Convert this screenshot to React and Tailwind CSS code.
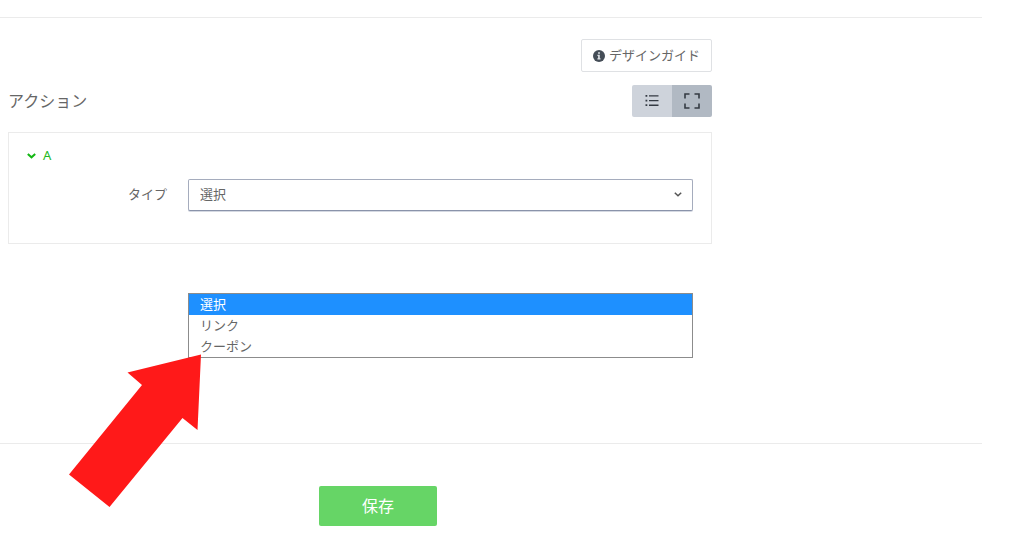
import { useState } from 'react';

const options = ['選択', 'リンク', 'クーポン'];

function InfoIcon() {
  return (
    <svg viewBox="0 0 12 12" className="size-3 shrink-0" aria-hidden="true">
      <circle cx="6" cy="6" r="6" fill="#454d57" />
      <path d="M5.1 2.2h1.8v1.6H5.1zM4.4 4.8h2.4v3.5h.7v1.1H4.4V8.3h.7V5.9h-.7z" fill="#dfe3e7" />
    </svg>
  );
}

function ListIcon() {
  return (
    <svg viewBox="0 0 14 14" className="size-3.5" aria-hidden="true" fill="#343a43">
      <path d="M0.500 1h1.800v1.800H0.500zM0.500 5.700h1.800v1.800H0.500zM0.500 10.300h1.800v1.800H0.500zM4 1.200h9.500v1.400H4zM4 5.900h9.500v1.400H4zM4 10.500h9.500v1.600H4z" />
    </svg>
  );
}

function ExpandIcon() {
  return (
    <svg viewBox="0 0 16 16" className="size-4" aria-hidden="true" fill="none" stroke="#343a43" strokeWidth="1.6">
      <path d="M1 5.500V1H5.500M10.500 1H15V5.500M15 10.500V15H10.500M5.500 15H1V10.500" />
    </svg>
  );
}

function Arrow() {
  return (
    <svg
      viewBox="0 0 132 153"
      className="pointer-events-none absolute top-[354px] left-[69px] h-[153px] w-[132px]"
      aria-hidden="true"
    >
      <path d="M132 0.500L128.500 76L113.500 64L40.500 153L0 120.500L73 31L58.500 18.500Z" fill="#ff1919" />
    </svg>
  );
}

export default function App() {
  const [value, setValue] = useState('選択');

  return (
    <main className="relative bg-white pt-[17px] pr-[42px] font-['Noto_Sans','Noto_Sans_CJK_JP',sans-serif] text-[#666]">
      <section className="border-y border-[#ebebeb] pt-[21px] pb-[199px] pl-2">
        <div className="max-w-[704px]">
          <div className="flex justify-end">
            <button
              type="button"
              className="flex h-[33px] items-center gap-1 rounded-xs border border-[#dfe1e4] px-[11px] text-[13px]"
            >
              <InfoIcon />
              デザインガイド
            </button>
          </div>

          <div className="mt-[13px] flex h-8 items-center justify-between">
            <h2 className="text-base">アクション</h2>
            <div className="flex h-8 overflow-hidden rounded-xs">
              <button type="button" aria-label="リスト" className="flex w-10 items-center justify-center bg-[#ced3db]">
                <ListIcon />
              </button>
              <button type="button" aria-label="拡大" className="flex w-10 items-center justify-center bg-[#b1b9c3]">
                <ExpandIcon />
              </button>
            </div>
          </div>

          <div className="mt-[15px] border border-[#ebebeb] px-[18px] pt-[11px] pb-8">
            <button type="button" className="flex h-6 items-center gap-[7px] text-[13px] text-[#22b822]">
              <svg viewBox="0 0 9 6" className="h-1.5 w-[9px]" aria-hidden="true" fill="none" stroke="#13b713" strokeWidth="2">
                <path d="M0.800 1L4.500 4.300L8.200 1" />
              </svg>
              A
            </button>
            <div className="mt-[11px] flex items-center gap-[21px]">
              <label htmlFor="type" className="w-[140px] text-right text-[13px]">
                タイプ
              </label>
              <div className="relative flex-1">
                <select
                  id="type"
                  value={value}
                  onChange={(e) => setValue(e.target.value)}
                  className="block h-8 w-full appearance-none rounded-xs border border-[#a5acbd] border-b-[#8a93aa] bg-white pl-[11px] text-[13px] shadow-[0_1px_0_#d5d9e2]"
                >
                  {options.map((o) => (
                    <option key={o}>{o}</option>
                  ))}
                </select>
                <svg
                  viewBox="0 0 8 5"
                  className="pointer-events-none absolute top-[13px] right-[11px] h-[5px] w-2"
                  aria-hidden="true"
                  fill="none"
                  stroke="#555"
                  strokeWidth="1.500"
                >
                  <path d="M0.800 0.800L4 3.800L7.200 0.800" />
                </svg>
                <ul
                  role="listbox"
                  aria-label="タイプ"
                  className="absolute top-[114px] left-0 w-full border border-[#8c8c8c] bg-white text-[13px] leading-[21px]"
                >
                  {options.map((o) => (
                    <li
                      key={o}
                      role="option"
                      aria-selected={o === value}
                      onClick={() => setValue(o)}
                      className="pl-[11px] aria-selected:bg-[#1e90ff] aria-selected:text-white"
                    >
                      {o}
                    </li>
                  ))}
                </ul>
              </div>
            </div>
          </div>
        </div>
      </section>

      <div className="flex max-w-[756px] justify-center pt-[42px] pb-3">
        <button type="button" className="h-10 w-[118px] rounded-xs bg-[#66d566] text-base text-white">
          保存
        </button>
      </div>
      <Arrow />
    </main>
  );
}
